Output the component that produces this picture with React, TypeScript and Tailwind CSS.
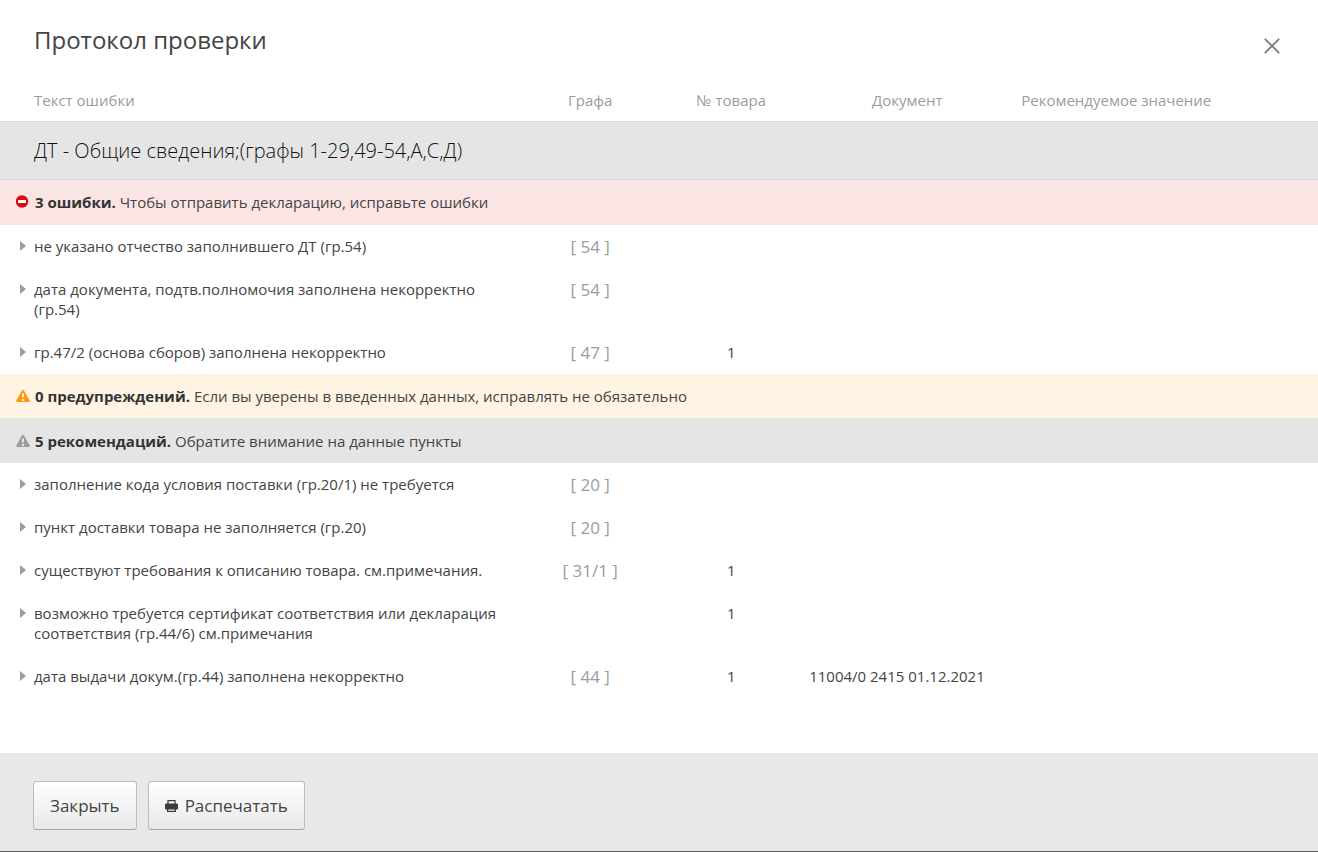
import { clsx } from 'clsx';
import { Fragment } from 'react';

type Level = 'error' | 'warning' | 'advice';

interface Issue {
  text: string;
  field?: string;
  goods?: string;
  doc?: string;
}

interface Group {
  level: Level;
  count: string;
  hint: string;
  issues: Issue[];
}

const groups: Group[] = [
  {
    level: 'error',
    count: '3 ошибки.',
    hint: 'Чтобы отправить декларацию, исправьте ошибки',
    issues: [
      { text: 'не указано отчество заполнившего ДТ (гр.54)', field: '54' },
      { text: 'дата документа, подтв.полномочия заполнена некорректно (гр.54)', field: '54' },
      { text: 'гр.47/2 (основа сборов) заполнена некорректно', field: '47', goods: '1' },
    ],
  },
  {
    level: 'warning',
    count: '0 предупреждений.',
    hint: 'Если вы уверены в введенных данных, исправлять не обязательно',
    issues: [],
  },
  {
    level: 'advice',
    count: '5 рекомендаций.',
    hint: 'Обратите внимание на данные пункты',
    issues: [
      { text: 'заполнение кода условия поставки (гр.20/1) не требуется', field: '20' },
      { text: 'пункт доставки товара не заполняется (гр.20)', field: '20' },
      { text: 'существуют требования к описанию товара. см.примечания.', field: '31/1', goods: '1' },
      {
        text: 'возможно требуется сертификат соответствия или декларация соответствия (гр.44/6) см.примечания',
        goods: '1',
      },
      {
        text: 'дата выдачи докум.(гр.44) заполнена некорректно',
        field: '44',
        goods: '1',
        doc: '11004/0 2415 01.12.2021',
      },
    ],
  },
];

function LevelIcon({ level }: { level: Level }) {
  if (level === 'error') {
    return (
      <svg className="w-[14px] h-[14px] shrink-0" viewBox="0 0 14 14" aria-hidden="true">
        <circle cx="6" cy="6.5" r="6.2" fill="#d90b0b" />
        <rect x="2" y="5" width="8" height="3" fill="#fff" />
      </svg>
    );
  }
  return (
    <svg
      className={clsx('w-[14px] h-[14px] shrink-0', level === 'warning' ? 'text-[#ff9a0d]' : 'text-[#9c9c9c]')}
      viewBox="0 0 14 14"
      aria-hidden="true"
    >
      <path
        d="M7 1.8 L12.8 12 H1.2 Z"
        fill="currentColor"
        stroke="currentColor"
        strokeWidth="2"
        strokeLinejoin="round"
      />
      <path d="M6 4.5 H8 V8.5 H6 Z M6 10 H8 V12 H6 Z" fill={level === 'warning' ? '#fff4e3' : '#e5e5e5'} />
    </svg>
  );
}

function GroupRow({ group }: { group: Group }) {
  return (
    <tr
      className={clsx(
        group.level === 'error' && 'h-[46px] bg-[#fbe5e4]',
        group.level === 'warning' && 'h-[44px] bg-[#fff4e3]',
        group.level === 'advice' && 'h-[45px] bg-[#e5e5e5]',
      )}
    >
      <th colSpan={5} scope="colgroup" className="pl-4 text-left font-normal">
        <div className="flex items-center gap-[5px]">
          <LevelIcon level={group.level} />
          <p>
            <strong className="font-bold text-[#333]">{group.count}</strong> {group.hint}
          </p>
        </div>
      </th>
    </tr>
  );
}

function IssueRow({ issue }: { issue: Issue }) {
  return (
    <tr className="align-top">
      <td className="pt-[11px] pb-3 pl-5 pr-5">
        <div className="flex items-start gap-2">
          <button type="button" aria-label="Подробнее" className="flex h-5 w-[6px] shrink-0 items-center">
            <svg className="w-[6px] h-[10px]" viewBox="0 0 6 10" aria-hidden="true">
              <path d="M0 0 L6 5 L0 10 Z" fill="#9c9c9c" />
            </svg>
          </button>
          <span>{issue.text}</span>
        </div>
      </td>
      <td className="pt-3 pb-[11px] text-center text-[17px] text-[#9c9c9c]">{issue.field && `[ ${issue.field} ]`}</td>
      <td className="pt-[11px] pb-3 text-center">{issue.goods}</td>
      <td className="pt-[11px] pb-3">{issue.doc}</td>
      <td />
    </tr>
  );
}

const buttonStyle =
  'flex h-[49px] items-center rounded-[3px] border border-[#bdbdbd] border-b-[#a3a3a3] bg-linear-to-b from-white to-[#e8e8e8] px-4 text-[17px]';

export default function App() {
  return (
    <div
      role="dialog"
      aria-labelledby="title"
      className="flex min-h-screen flex-col border-b border-[#5c5c5c] bg-white font-['Segoe_UI','Open_Sans',sans-serif] text-[15px] leading-5 text-[#444]"
    >
      <header className="flex h-20 items-center justify-between pl-[34px] pr-[38px]">
        <h1 id="title" className="text-[24px]">
          Протокол проверки
        </h1>
        <button type="button" aria-label="Закрыть окно" className="mt-3">
          <svg className="w-4 h-4" viewBox="0 0 16 16" fill="none" stroke="#7a7a7a" strokeWidth="1.8" aria-hidden="true">
            <path d="M0.8 0.8 L15.2 15.2 M15.2 0.8 L0.8 15.2" />
          </svg>
        </button>
      </header>

      <table className="w-full table-fixed border-collapse">
        <colgroup>
          <col className="w-[40%]" />
          <col className="w-[126px]" />
          <col className="w-[156px]" />
          <col className="w-[196px]" />
          <col />
        </colgroup>
        <thead>
          <tr className="h-[41px] text-[#9c9c9c]">
            <th scope="col" className="pl-[34px] text-left font-normal">Текст ошибки</th>
            <th scope="col" className="font-normal">Графа</th>
            <th scope="col" className="font-normal">№ товара</th>
            <th scope="col" className="font-normal">Документ</th>
            <th scope="col" className="pl-4 text-left font-normal">Рекомендуемое значение</th>
          </tr>
        </thead>
        <tbody>
          <tr className="h-[58px] border-y border-[#d9d9d9] bg-[#e5e5e5]">
            <th colSpan={5} scope="colgroup" className="pt-[2px] pl-[34px] text-left text-[20px] font-light text-[#111]">
              ДТ - Общие сведения;(графы 1-29,49-54,А,С,Д)
            </th>
          </tr>
          {groups.map((group) => (
            <Fragment key={group.level}>
              <GroupRow group={group} />
              {group.issues.map((issue) => (
                <IssueRow key={issue.text} issue={issue} />
              ))}
            </Fragment>
          ))}
        </tbody>
      </table>

      <footer className="mt-auto flex gap-[11px] bg-[#e8e8e8] pt-7 pr-[33px] pb-[21px] pl-[33px]">
        <button type="button" className={buttonStyle}>
          Закрыть
        </button>
        <button type="button" className={clsx(buttonStyle, 'gap-[7px]')}>
          <svg className="w-[13px] h-3" viewBox="0 0 13 12" aria-hidden="true">
            <path d="M3 4 V0.6 H10 V4" fill="none" stroke="#3b3b3b" strokeWidth="1.2" />
            <rect x="0" y="3.6" width="13" height="6" rx="1.4" fill="#3b3b3b" />
            <path d="M2.6 9 V11.4 H10.4 V9 Z" fill="#f2f2f2" stroke="#3b3b3b" strokeWidth="1.2" />
          </svg>
          Распечатать
        </button>
      </footer>
    </div>
  );
}
